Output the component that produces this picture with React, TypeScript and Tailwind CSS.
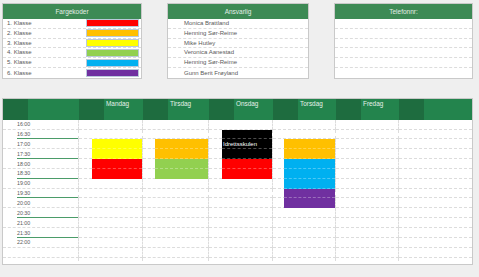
import React from 'react';

const FONT = { fontFamily: '"Liberation Sans", Arial, sans-serif' };

const classes = [
  { label: '1. Klasse', color: 'bg-[#ff0000]' },
  { label: '2. Klasse', color: 'bg-[#ffc000]' },
  { label: '3. Klasse', color: 'bg-[#ffff00]' },
  { label: '4. Klasse', color: 'bg-[#92d050]' },
  { label: '5. Klasse', color: 'bg-[#00b0f0]' },
  { label: '6. Klasse', color: 'bg-[#7030a0]' },
];

const people = [
  'Monica Brattland',
  'Henning Sør-Reime',
  'Mike Hutley',
  'Veronica Aanestad',
  'Henning Sør-Reime',
  'Gunn Berit Frøyland',
];

// header: [width, dark?, label]
const headCells: [string, boolean, string][] = [
  ['w-[25px]', true, ''],
  ['w-[51px]', false, ''],
  ['w-[25px]', true, ''],
  ['w-[39px]', false, 'Mandag'],
  ['w-[25px]', true, ''],
  ['w-[41px]', false, 'Tirsdag'],
  ['w-[25px]', true, ''],
  ['w-[39px]', false, 'Onsdag'],
  ['w-[25px]', true, ''],
  ['w-[38px]', false, 'Torsdag'],
  ['w-[25px]', true, ''],
  ['w-[38px]', false, 'Fredag'],
  ['w-[25px]', true, ''],
  ['flex-1', false, ''],
];

const times = [
  '16:00', '16:30', '17:00', '17:30', '18:00', '18:30', '19:00',
  '19:30', '20:00', '20:30', '21:00', '21:30', '22:00', '', '',
];

const dayCols = ['w-[64px]', 'w-[66px]', 'w-[64px]', 'w-[63px]', 'w-[63px]', 'flex-1'];
const blockGap = ['w-[13px]', 'w-[12px]', 'w-[13px]', 'w-[11px]', 'w-[12px]', 'w-[12px]'];

// colour per day column per row
const Y = 'bg-[#ffff00]', R = 'bg-[#ff0000]', O = 'bg-[#ffc000]', G = 'bg-[#92d050]';
const K = 'bg-black', B = 'bg-[#00b0f0]', P = 'bg-[#7030a0]';
const blocks: Record<number, Record<number, string>> = {
  0: { 2: Y, 3: Y, 4: R, 5: R },
  1: { 2: O, 3: O, 4: G, 5: G },
  2: { 1: K, 2: K, 3: K, 4: R, 5: R },
  3: { 2: O, 3: O, 4: B, 5: B, 6: B, 7: P, 8: P },
};

function InfoBox({ title, width, children }: { title: string; width: string; children: React.ReactNode }) {
  return (
    <div className={`${width} h-[76px] bg-white border border-[#c9c9c9] flex flex-col`}>
      <div className="h-[16px] bg-[#3d8a55] text-[#e3eee6] text-[6.5px] flex items-center justify-center">
        {title}
      </div>
      <div className="flex flex-col">{children}</div>
    </div>
  );
}

function BoxRow({ last, children, className = '' }: { last: boolean; children?: React.ReactNode; className?: string }) {
  return (
    <div
      className={`h-[9.85px] flex items-center text-[6px] text-[#595959] ${
        last ? '' : 'border-b border-dashed border-[#dcdcdc]'
      } ${className}`}
    >
      {children}
    </div>
  );
}

export default function App() {
  return (
    <div className="w-[479px] h-[277px] bg-[#efefef] overflow-hidden" style={FONT}>
      {/* ── Top boxes ── */}
      <div className="flex gap-[25px] pl-[2px] pt-[3px]">
        <InfoBox title="Fargekoder" width="w-[140px]">
          {classes.map((c, i) => (
            <BoxRow key={i} last={i === classes.length - 1} className="pl-[4px] pr-[2px] justify-between">
              <span>{c.label}</span>
              <span className={`w-[53px] h-[8px] border border-[#b9c9da] ${c.color}`} />
            </BoxRow>
          ))}
        </InfoBox>
        <InfoBox title="Ansvarlig" width="w-[142px]">
          {people.map((p, i) => (
            <BoxRow key={i} last={i === people.length - 1} className="pl-[16px]">
              {p}
            </BoxRow>
          ))}
        </InfoBox>
        <InfoBox title="Telefonnr:" width="w-[139px]">
          {people.map((_, i) => (
            <BoxRow key={i} last={i === people.length - 1} />
          ))}
        </InfoBox>
      </div>

      {/* ── Schedule ── */}
      <div className="ml-[2px] mt-[19px] w-[471px] h-[167px] bg-white border border-[#c9c9c9] overflow-hidden flex flex-col">
        <div className="h-[20.7px] flex shrink-0">
          {headCells.map(([w, dark, label], i) => (
            <div
              key={i}
              className={`${w} h-full ${dark ? 'bg-[#1e6c3f]' : 'bg-[#23844d]'} text-[#e6f0e9] text-[6.4px] pl-[2px] pt-[2px] leading-none`}
            >
              {label}
            </div>
          ))}
        </div>

        {times.map((t, r) => {
          const green = r % 2 === 1 && r < 12;
          return (
            <div key={r} className="h-[9.85px] flex shrink-0">
              {/* time column */}
              <div
                className={`w-[76px] h-full pl-[14px] border-r border-dashed border-[#dcdcdc] ${
                  green ? '' : 'border-b'
                }`}
              >
                <div
                  className={`h-full flex items-end pb-[1px] text-[5.3px] text-[#595959] leading-none ${
                    green ? 'border-b border-solid border-[#4b9c69]' : ''
                  }`}
                >
                  {t}
                </div>
              </div>
              {dayCols.map((w, c) => {
                const fill = blocks[c]?.[r];
                const next = blocks[c]?.[r + 1];
                return (
                  <div
                    key={c}
                    className={`${w} h-full flex border-b border-dashed border-[#dcdcdc] ${
                      c < dayCols.length - 1 ? 'border-r' : ''
                    }`}
                  >
                    <div className={blockGap[c]} />
                    {fill && (
                      <div
                        className={`flex-1 h-[calc(100%+1px)] ${fill} flex items-end pb-[1px] pl-[1px] ${
                          next ? 'border-b border-dashed border-white/30' : ''
                        }`}
                      >
                        {c === 2 && r === 2 && (
                          <span className="text-[6px] text-white leading-none">Idrettsskulen</span>
                        )}
                      </div>
                    )}
                  </div>
                );
              })}
            </div>
          );
        })}
      </div>
    </div>
  );
}
